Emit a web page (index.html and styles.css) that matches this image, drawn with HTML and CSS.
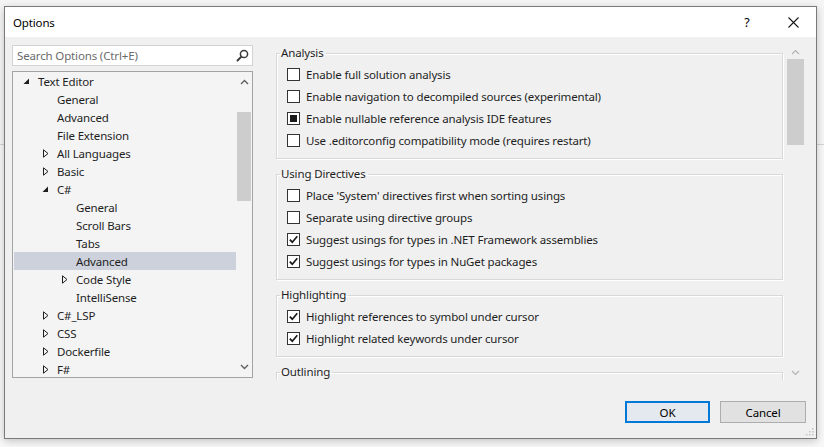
FILE: index.html
```html
<!DOCTYPE html>
<html>
<head>
<meta charset="utf-8">
<link rel="stylesheet" href="styles.css">
</head>
<body>
<div class="dialog">
  <div class="titlebar">
    <span class="title">Options</span>
    <span class="tb-btn help">?</span>
    <span class="tb-btn close"><svg width="11" height="11" viewBox="0 0 11 11"><path d="M0.5 0.5 L10.5 10.5 M10.5 0.5 L0.5 10.5" stroke="#1a1a1a" stroke-width="1.1" fill="none"/></svg></span>
  </div>
  <div class="main">
    <div class="top">
      <div class="left">
        <div class="search">
          <span class="placeholder">Search Options (Ctrl+E)</span>
          <svg class="search-icon" width="13" height="13" viewBox="0 0 13 13"><circle cx="8" cy="5" r="3.6" stroke="#3c3c3c" stroke-width="1.5" fill="none"/><path d="M5.4 7.6 L1.5 11.5" stroke="#3c3c3c" stroke-width="2" stroke-linecap="round"/></svg>
        </div>
        <div class="tree">
          <div class="tree-list">
            <div class="row l1"><span class="exp"><svg width="7" height="7" viewBox="0 0 7 7"><path d="M6 0.5 L6 6 L0.5 6 Z" fill="#1e1e1e"/></svg></span><span>Text Editor</span></div>
            <div class="row l2"><span class="exp"></span><span>General</span></div>
            <div class="row l2"><span class="exp"></span><span>Advanced</span></div>
            <div class="row l2"><span class="exp"></span><span>File Extension</span></div>
            <div class="row l2"><span class="exp col"><svg width="6" height="9" viewBox="0 0 6 9"><path d="M0.5 0.8 L5 4.5 L0.5 8.2 Z" stroke="#1e1e1e" stroke-width="1" fill="none"/></svg></span><span>All Languages</span></div>
            <div class="row l2"><span class="exp col"><svg width="6" height="9" viewBox="0 0 6 9"><path d="M0.5 0.8 L5 4.5 L0.5 8.2 Z" stroke="#1e1e1e" stroke-width="1" fill="none"/></svg></span><span>Basic</span></div>
            <div class="row l2"><span class="exp"><svg width="7" height="7" viewBox="0 0 7 7"><path d="M6 0.5 L6 6 L0.5 6 Z" fill="#1e1e1e"/></svg></span><span>C#</span></div>
            <div class="row l3"><span class="exp"></span><span>General</span></div>
            <div class="row l3"><span class="exp"></span><span>Scroll Bars</span></div>
            <div class="row l3"><span class="exp"></span><span>Tabs</span></div>
            <div class="row l3 selected"><span class="exp"></span><span>Advanced</span></div>
            <div class="row l3"><span class="exp col"><svg width="6" height="9" viewBox="0 0 6 9"><path d="M0.5 0.8 L5 4.5 L0.5 8.2 Z" stroke="#1e1e1e" stroke-width="1" fill="none"/></svg></span><span>Code Style</span></div>
            <div class="row l3"><span class="exp"></span><span>IntelliSense</span></div>
            <div class="row l2"><span class="exp col"><svg width="6" height="9" viewBox="0 0 6 9"><path d="M0.5 0.8 L5 4.5 L0.5 8.2 Z" stroke="#1e1e1e" stroke-width="1" fill="none"/></svg></span><span>C#_LSP</span></div>
            <div class="row l2"><span class="exp col"><svg width="6" height="9" viewBox="0 0 6 9"><path d="M0.5 0.8 L5 4.5 L0.5 8.2 Z" stroke="#1e1e1e" stroke-width="1" fill="none"/></svg></span><span>CSS</span></div>
            <div class="row l2"><span class="exp col"><svg width="6" height="9" viewBox="0 0 6 9"><path d="M0.5 0.8 L5 4.5 L0.5 8.2 Z" stroke="#1e1e1e" stroke-width="1" fill="none"/></svg></span><span>Dockerfile</span></div>
            <div class="row l2"><span class="exp col"><svg width="6" height="9" viewBox="0 0 6 9"><path d="M0.5 0.8 L5 4.5 L0.5 8.2 Z" stroke="#1e1e1e" stroke-width="1" fill="none"/></svg></span><span>F#</span></div>
          </div>
          <div class="vscroll tree-scroll">
            <svg class="arrow" width="9" height="6" viewBox="0 0 9 6"><path d="M1 5 L4.5 1.5 L8 5" stroke="#606060" stroke-width="1.4" fill="none"/></svg>
            <div class="track"><div class="thumb tree-thumb"></div></div>
            <svg class="arrow" width="9" height="6" viewBox="0 0 9 6"><path d="M1 1 L4.5 4.5 L8 1" stroke="#606060" stroke-width="1.4" fill="none"/></svg>
          </div>
        </div>
      </div>
      <div class="right">
        <div class="viewport">
          <fieldset class="group">
            <legend>Analysis</legend>
            <div class="opt"><span class="cb"></span><span>Enable full solution analysis</span></div>
            <div class="opt"><span class="cb"></span><span>Enable navigation to decompiled sources (experimental)</span></div>
            <div class="opt"><span class="cb ind"><span class="sq"></span></span><span>Enable nullable reference analysis IDE features</span></div>
            <div class="opt"><span class="cb"></span><span>Use .editorconfig compatibility mode (requires restart)</span></div>
          </fieldset>
          <fieldset class="group">
            <legend>Using Directives</legend>
            <div class="opt"><span class="cb"></span><span>Place 'System' directives first when sorting usings</span></div>
            <div class="opt"><span class="cb"></span><span>Separate using directive groups</span></div>
            <div class="opt"><span class="cb"><svg width="11" height="11" viewBox="0 0 11 11"><path d="M1.8 5.6 L4.3 8.2 L9.3 2.3" stroke="#1a1a1a" stroke-width="1.7" fill="none"/></svg></span><span>Suggest usings for types in .NET Framework assemblies</span></div>
            <div class="opt"><span class="cb"><svg width="11" height="11" viewBox="0 0 11 11"><path d="M1.8 5.6 L4.3 8.2 L9.3 2.3" stroke="#1a1a1a" stroke-width="1.7" fill="none"/></svg></span><span>Suggest usings for types in NuGet packages</span></div>
          </fieldset>
          <fieldset class="group">
            <legend>Highlighting</legend>
            <div class="opt"><span class="cb"><svg width="11" height="11" viewBox="0 0 11 11"><path d="M1.8 5.6 L4.3 8.2 L9.3 2.3" stroke="#1a1a1a" stroke-width="1.7" fill="none"/></svg></span><span>Highlight references to symbol under cursor</span></div>
            <div class="opt"><span class="cb"><svg width="11" height="11" viewBox="0 0 11 11"><path d="M1.8 5.6 L4.3 8.2 L9.3 2.3" stroke="#1a1a1a" stroke-width="1.7" fill="none"/></svg></span><span>Highlight related keywords under cursor</span></div>
          </fieldset>
          <fieldset class="group last">
            <legend>Outlining</legend>
          </fieldset>
        </div>
        <div class="vscroll page-scroll">
          <svg class="arrow" width="9" height="6" viewBox="0 0 9 6"><path d="M1 5 L4.5 1.5 L8 5" stroke="#b4b4b4" stroke-width="1.2" fill="none"/></svg>
          <div class="track"><div class="thumb page-thumb"></div></div>
          <svg class="arrow" width="9" height="6" viewBox="0 0 9 6"><path d="M1 1 L4.5 4.5 L8 1" stroke="#b4b4b4" stroke-width="1.2" fill="none"/></svg>
        </div>
      </div>
    </div>
    <div class="buttons">
      <button class="btn ok">OK</button>
      <button class="btn">Cancel</button>
    </div>
    <svg class="grip" width="9" height="9" viewBox="0 0 9 9"><g fill="#c4c4c4"><rect x="7" y="1" width="1.5" height="1.5"/><rect x="4" y="4" width="1.5" height="1.5"/><rect x="7" y="4" width="1.5" height="1.5"/><rect x="1" y="7" width="1.5" height="1.5"/><rect x="4" y="7" width="1.5" height="1.5"/><rect x="7" y="7" width="1.5" height="1.5"/></g></svg>
  </div>
</div>
</body>
</html>
```

FILE: styles.css
```css
* { box-sizing: border-box; }
html, body { margin: 0; padding: 0; }
body {
  width: 824px;
  height: 447px;
  overflow: hidden;
  background: linear-gradient(#f6f6f6 0, #f6f6f6 144px, #d4d4d4 144px, #d4d4d4 145px, #f8f8f8 145px);
  font-family: "Noto Sans", "Segoe UI", sans-serif;
  font-size: 11.5px;
  letter-spacing: -0.15px;
  color: #1e1e1e;
  padding: 6px 0 0 4px;
}
.dialog {
  width: 813px;
  height: 433px;
  border: 1px solid #7a7a7a;
  background: #f0f0f0;
  box-shadow: 0 2px 8px rgba(0,0,0,0.22);
  display: flex;
  flex-direction: column;
}
.titlebar {
  height: 30px;
  background: #ffffff;
  display: flex;
  align-items: center;
  padding-left: 8px;
  flex: none;
}
.title { flex: 1; color: #000; }
.tb-btn {
  width: 46px;
  height: 30px;
  display: flex;
  align-items: center;
  justify-content: center;
  color: #000;
}
.help { font-size: 12.5px; }
.main {
  flex: 1;
  display: flex;
  flex-direction: column;
  padding: 7px 10px 14px 7px;
  gap: 21px;
  position: relative;
}
.top {
  height: 336px;
  display: flex;
  gap: 19px;
}
.left {
  width: 241px;
  flex: none;
  display: flex;
  flex-direction: column;
  gap: 5px;
  padding-top: 1px;
}
.search {
  height: 21px;
  background: #fff;
  border: 1px solid #d3d3d3;
  display: flex;
  align-items: center;
  padding-left: 4px;
  padding-right: 3px;
}
.placeholder { flex: 1; color: #6b6b6b; }
.tree {
  height: 307px;
  border: 1px solid #a3a3a3;
  background: #f4f4f4;
  display: flex;
}
.tree-list {
  flex: 1;
  padding: 0 0 0 1px;
  overflow: hidden;
}
.row {
  height: 18px;
  display: flex;
  align-items: center;
  white-space: nowrap;
}
.row.l1 { padding-left: 9px; }
.row.l2 { padding-left: 28px; }
.row.l3 { padding-left: 47px; }
.row.selected { background: #cdd1db; }
.exp {
  width: 15px;
  flex: none;
  display: flex;
  align-items: center;
}
.exp.col svg { margin-left: 1px; }
.vscroll {
  width: 17px;
  flex: none;
  display: flex;
  flex-direction: column;
  align-items: center;
}
.vscroll .arrow { flex: none; margin: 7px 0; }
.track { flex: 1; width: 100%; }
.thumb { background: #cdcdcd; }
.tree-scroll { width: 16px; }
.tree-thumb { height: 89px; margin: 20px 1px 0 1px; }
.right {
  flex: 1;
  display: flex;
  margin-right: 2px;
}
.viewport {
  flex: 1;
  overflow: hidden;
  padding: 1px 4px 0 4px;
}
.group {
  margin: 0 0 7px 0;
  padding: 2px 8px 7px 10px;
  border: 1px solid #d8d8d8;
  box-shadow: inset 1px 1px 0 #ffffff, 1px 1px 0 #ffffff;
  min-width: 0;
}
.group.last { height: 60px; }
.group legend {
  padding: 0 2px 0 1px;
  margin-left: -7px;
  line-height: 16px;
  color: #1e1e1e;
}
.opt {
  height: 22px;
  display: flex;
  align-items: center;
  white-space: nowrap;
}
.cb {
  width: 13px;
  height: 13px;
  border: 1px solid #333333;
  background: #ffffff;
  margin-right: 6px;
  flex: none;
  display: flex;
  align-items: center;
  justify-content: center;
}
.cb .sq { width: 7px; height: 7px; background: #1a1a1a; }
.page-scroll .arrow { margin: 5px 0 4px 0; }
.page-thumb { height: 86px; margin-top: 0; }
.buttons {
  height: 22px;
  display: flex;
  justify-content: flex-end;
  gap: 10px;
}
.btn {
  font: inherit;
  letter-spacing: inherit;
  color: #000;
  width: 86px;
  height: 22px;
  background: #e1e1e1;
  border: 1px solid #adadad;
  padding: 0;
}
.btn.ok {
  width: 85px;
  border: 2px solid #0078d7;
  background: #e3e9ef;
}
.grip { position: absolute; right: 2px; bottom: 2px; }
```
